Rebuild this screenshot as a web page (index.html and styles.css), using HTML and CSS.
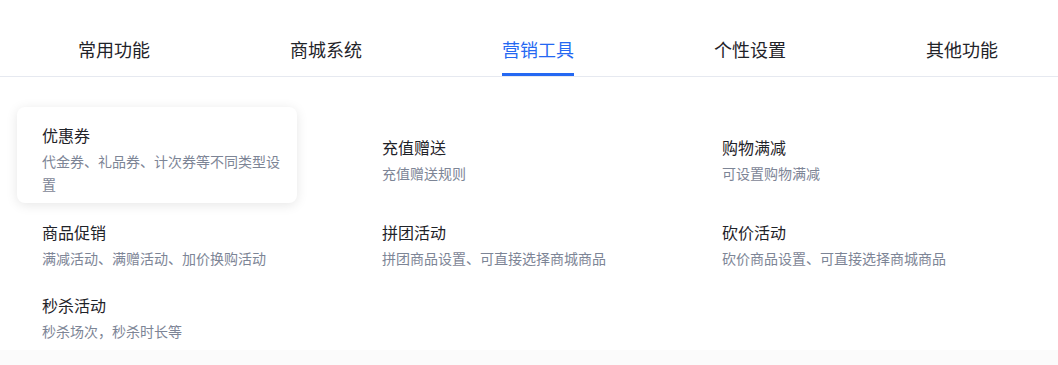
FILE: index.html
```html
<!DOCTYPE html>
<html lang="zh-CN">
<head>
    <meta charset="UTF-8">
    <meta name="viewport" content="width=device-width, initial-scale=1.0">
    <title>营销工具</title>
    <link rel="stylesheet" href="styles.css">
</head>
<body>
    <div class="tabs">
        <div class="tab"><span class="tab-label">常用功能</span></div>
        <div class="tab"><span class="tab-label">商城系统</span></div>
        <div class="tab active"><span class="tab-label">营销工具</span></div>
        <div class="tab"><span class="tab-label">个性设置</span></div>
        <div class="tab"><span class="tab-label">其他功能</span></div>
    </div>

    <div class="panel">
        <div class="grid">
            <div class="item hover">
                <div class="item-title">优惠券</div>
                <div class="item-desc">代金券、礼品券、计次券等不同类型设置</div>
            </div>
            <div class="item">
                <div class="item-title">充值赠送</div>
                <div class="item-desc">充值赠送规则</div>
            </div>
            <div class="item">
                <div class="item-title">购物满减</div>
                <div class="item-desc">可设置购物满减</div>
            </div>
            <div class="item">
                <div class="item-title">商品促销</div>
                <div class="item-desc">满减活动、满赠活动、加价换购活动</div>
            </div>
            <div class="item">
                <div class="item-title">拼团活动</div>
                <div class="item-desc">拼团商品设置、可直接选择商城商品</div>
            </div>
            <div class="item">
                <div class="item-title">砍价活动</div>
                <div class="item-desc">砍价商品设置、可直接选择商城商品</div>
            </div>
            <div class="item">
                <div class="item-title">秒杀活动</div>
                <div class="item-desc">秒杀场次，秒杀时长等</div>
            </div>
        </div>
    </div>
</body>
</html>
```

FILE: styles.css
```css
body {
    font-family: "Noto Sans CJK SC", "Noto Sans", sans-serif;
    background-color: #fbfbfb;
    margin: 0;
    padding: 0;
    overflow: hidden;
}
.tabs {
    display: flex;
    padding: 27px 0 0 8px;
    background-color: #fff;
    border-bottom: 1px solid #e6e9f0;
    overflow: hidden;
}
.tab {
    flex: 0 0 212px;
    display: flex;
    justify-content: center;
}
.tab-label {
    font-size: 18px;
    line-height: 24px;
    color: #1f2329;
    padding: 10px 0 12px;
    border-bottom: 3px solid transparent;
}
.tab.active .tab-label {
    color: #2468f2;
    border-bottom-color: #2468f2;
}
.panel {
    background-color: #fff;
    padding: 30px 0 0 17px;
}
.grid {
    display: grid;
    grid-template-columns: repeat(3, 280px);
    column-gap: 60px;
    row-gap: 1px;
    align-items: center;
}
.item {
    padding: 16px 12px 6px 25px;
    border-radius: 8px;
}
.item.hover {
    box-shadow: 0 2px 12px rgba(0, 0, 0, 0.1);
}
.item-title {
    font-size: 16px;
    line-height: 24px;
    color: #1f2329;
    margin-bottom: 3px;
}
.item-desc {
    font-size: 14px;
    line-height: 23.4px;
    color: #7d8596;
}
```
